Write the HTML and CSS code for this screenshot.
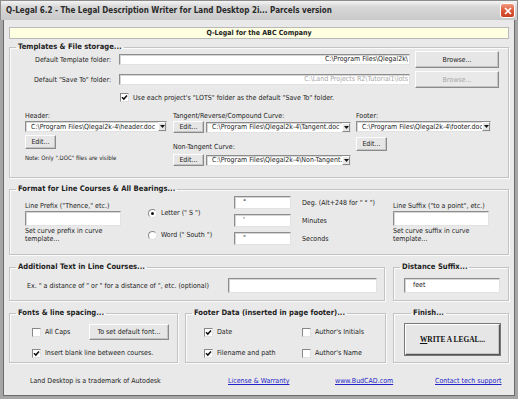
FILE: index.html
```html
<!DOCTYPE html>
<html lang="en">
<head>
    <meta charset="UTF-8">
    <title>Q-Legal 6.2</title>
    <link rel="stylesheet" href="styles.css">
</head>
<body>
<div class="window">
    <div class="titlebar">
        <span class="title">Q-Legal 6.2 - The Legal Description Writer for Land Desktop 2i... Parcels version</span>
        <span class="close"><svg width="8" height="8" viewBox="0 0 8 8"><path d="M1 1L7 7M7 1L1 7" stroke="#fff" stroke-width="1.6"/></svg></span>
    </div>
    <div class="frame">
        <div class="banner">Q-Legal for the ABC Company</div>

        <fieldset class="group templates">
            <legend>Templates &amp; File storage...</legend>
            <div class="folder-row first">
                <span class="folder-label">Default Template folder:</span>
                <span class="field folder-path">C:\Program Files\Qlegal2k\</span>
                <span class="button browse">Browse...</span>
            </div>
            <div class="folder-row">
                <span class="folder-label">Default "Save To" folder:</span>
                <span class="field folder-path disabled">C:\Land Projects R2\Tutorial1\lots</span>
                <span class="button browse disabled">Browse...</span>
            </div>
            <div class="check lots-check">
                <span class="box"><svg width="7" height="7" viewBox="0 0 7 7"><path d="M1 3.2l1.8 1.9L6 1.4" fill="none" stroke="#111" stroke-width="1.5"/></svg></span>
                Use each project's "LOTS" folder as the default "Save To" folder.
            </div>
            <div class="template-cols">
                <div class="tcol header-col">
                    <div class="cap">Header:</div>
                    <div class="field combo"><span class="combo-text">C:\Program Files\Qlegal2k-4\header.doc</span><span class="drop"><svg width="5" height="3" viewBox="0 0 5 3"><path d="M0 0h5L2.5 3z" fill="#111"/></svg></span></div>
                    <span class="button edit">Edit...</span>
                    <div class="note">Note: Only ".DOC" files are visible</div>
                </div>
                <div class="tcol curve-col">
                    <div class="cap">Tangent/Reverse/Compound Curve:</div>
                    <div class="edit-row">
                        <span class="button edit">Edit...</span>
                        <div class="field combo"><span class="combo-text">C:\Program Files\Qlegal2k-4\Tangent.doc</span><span class="drop"><svg width="5" height="3" viewBox="0 0 5 3"><path d="M0 0h5L2.5 3z" fill="#111"/></svg></span></div>
                    </div>
                    <div class="cap non-tangent">Non-Tangent Curve:</div>
                    <div class="edit-row second">
                        <span class="button edit">Edit...</span>
                        <div class="field combo"><span class="combo-text">C:\Program Files\Qlegal2k-4\Non-Tangent.doc</span><span class="drop"><svg width="5" height="3" viewBox="0 0 5 3"><path d="M0 0h5L2.5 3z" fill="#111"/></svg></span></div>
                    </div>
                </div>
                <div class="tcol footer-col">
                    <div class="cap">Footer:</div>
                    <div class="field combo"><span class="combo-text">C:\Program Files\Qlegal2k-4\footer.doc</span><span class="drop"><svg width="5" height="3" viewBox="0 0 5 3"><path d="M0 0h5L2.5 3z" fill="#111"/></svg></span></div>
                    <span class="button edit footer-edit">Edit...</span>
                </div>
            </div>
        </fieldset>

        <fieldset class="group format">
            <legend>Format for Line Courses &amp; All Bearings...</legend>
            <div class="format-cols">
                <div class="fcol prefix-col">
                    <div class="cap">Line Prefix ("Thence," etc.)</div>
                    <div class="field tall"></div>
                    <div class="hint">Set curve prefix in curve template...</div>
                </div>
                <div class="fcol radio-col">
                    <div class="radio"><span class="dot on"></span>Letter (" S ")</div>
                    <div class="radio word"><span class="dot"></span>Word (" South ")</div>
                </div>
                <div class="fcol symbol-col">
                    <div class="field symbol">°</div>
                    <div class="field symbol">'</div>
                    <div class="field symbol">"</div>
                </div>
                <div class="fcol unit-col">
                    <div class="unit">Deg. (Alt+248 for " ° ")</div>
                    <div class="unit">Minutes</div>
                    <div class="unit">Seconds</div>
                </div>
                <div class="fcol prefix-col suffix-col">
                    <div class="cap">Line Suffix ("to a point", etc.)</div>
                    <div class="field tall"></div>
                    <div class="hint">Set curve suffix in curve template...</div>
                </div>
            </div>
        </fieldset>

        <div class="group-row">
            <fieldset class="group additional">
                <legend>Additional Text in Line Courses...</legend>
                <div class="line-row">
                    <span>Ex. " a distance of " or " for a distance of ", etc. (optional)</span>
                    <div class="field tall extra-text"></div>
                </div>
            </fieldset>
            <fieldset class="group distance">
                <legend>Distance Suffix...</legend>
                <div class="line-row">
                    <div class="field tall distance-text">feet</div>
                </div>
            </fieldset>
        </div>

        <div class="group-row">
            <fieldset class="group fonts">
                <legend>Fonts &amp; line spacing...</legend>
                <div class="fonts-row">
                    <div class="check"><span class="box"></span>All Caps</div>
                    <span class="button font-btn">To set default font...</span>
                </div>
                <div class="check blank-check">
                    <span class="box"><svg width="7" height="7" viewBox="0 0 7 7"><path d="M1 3.2l1.8 1.9L6 1.4" fill="none" stroke="#111" stroke-width="1.5"/></svg></span>
                    Insert blank line between courses.
                </div>
            </fieldset>
            <fieldset class="group footer-data">
                <legend>Footer Data (inserted in page footer)...</legend>
                <div class="footer-grid">
                    <div class="check"><span class="box"><svg width="7" height="7" viewBox="0 0 7 7"><path d="M1 3.2l1.8 1.9L6 1.4" fill="none" stroke="#111" stroke-width="1.5"/></svg></span>Date</div>
                    <div class="check"><span class="box"></span>Author's Initials</div>
                    <div class="check"><span class="box"><svg width="7" height="7" viewBox="0 0 7 7"><path d="M1 3.2l1.8 1.9L6 1.4" fill="none" stroke="#111" stroke-width="1.5"/></svg></span>Filename and path</div>
                    <div class="check"><span class="box"></span>Author's Name</div>
                </div>
            </fieldset>
            <fieldset class="group finish">
                <legend>Finish...</legend>
                <span class="button write"><u>W</u>RITE A LEGAL...</span>
            </fieldset>
        </div>

        <div class="bottom-links">
            <span>Land Desktop is a trademark of Autodesk</span>
            <a href="#">License &amp; Warranty</a>
            <a href="#">www.BudCAD.com</a>
            <a href="#">Contact tech support</a>
        </div>
    </div>
</div>
</body>
</html>
```

FILE: styles.css
```css
* {
    box-sizing: border-box;
}
body {
    margin: 0;
    font-family: "DejaVu Sans Condensed", "DejaVu Sans", sans-serif;
    font-stretch: condensed;
    font-size: 7px;
    color: #222;
    background: #fff;
}
.window {
    width: 518px;
    height: 399px;
    display: flex;
    flex-direction: column;
    background: #e9e9e9;
}
.titlebar {
    height: 20px;
    display: flex;
    align-items: center;
    justify-content: space-between;
    padding: 0 2px 0 5px;
    background: linear-gradient(#f4f4f4, #d8d8d8 30%, #c9c9c9);
    border: 1px solid #8c8c8c;
    border-bottom: none;
}
.title {
    font-size: 8px;
    font-weight: bold;
    color: #2a2a2a;
    white-space: nowrap;
}
.close {
    width: 15px;
    height: 15px;
    display: flex;
    align-items: center;
    justify-content: center;
    border: 1px solid #fff;
    border-radius: 3px;
    background: linear-gradient(#f09a80, #dd5a3c 50%, #c93d20);
}
.frame {
    flex: 1;
    display: flex;
    flex-direction: column;
    border: solid #a6a6a6;
    border-width: 0 3px 3px;
    box-shadow: inset 1px 0 #6c6c6c, inset -1px 0 #6c6c6c, inset 0 -1px #6c6c6c;
    padding: 7px 6px 0;
}
.banner {
    height: 12px;
    line-height: 10px;
    text-align: center;
    font-weight: bold;
    background: #ffffe1;
    border: 1px solid #b9b9b9;
}

/* group boxes */
.group {
    margin: 0;
    padding: 0;
    min-width: 0;
    border: 1px solid #c3c3c3;
    box-shadow: inset 1px 1px #fbfbfb, 1px 1px #fbfbfb;
}
.group legend {
    margin-left: 6px;
    padding: 0 2px;
    font-size: 7.6px;
    font-weight: bold;
    line-height: 10px;
    color: #1e1e1e;
}
.templates {
    margin-top: 3px;
}
.format {
    margin-top: 6px;
}

/* controls */
.field {
    background: #fff;
    border: 1px solid;
    border-color: #8d8d8d #e2e2e2 #e2e2e2 #8d8d8d;
    box-shadow: inset 1px 1px #d6d6d6;
}
.button {
    display: flex;
    align-items: center;
    justify-content: center;
    background: #e6e6e6;
    border: 1px solid;
    border-color: #fdfdfd #8a8a8a #8a8a8a #fdfdfd;
    box-shadow: inset -1px -1px #c4c4c4;
    color: #222;
    white-space: nowrap;
}
.disabled {
    color: #a6a6a6;
}
.button.disabled {
    background: #e9e9e9;
}
.check {
    display: flex;
    align-items: center;
    white-space: nowrap;
}
.box {
    width: 9px;
    height: 9px;
    margin-right: 4px;
    display: flex;
    align-items: center;
    justify-content: center;
    background: #fff;
    border: 1px solid;
    border-color: #888 #e2e2e2 #e2e2e2 #888;
    flex-shrink: 0;
}
.cap {
    line-height: 10px;
    white-space: nowrap;
}

/* template folders */
.folder-row {
    display: flex;
    align-items: center;
    height: 17px;
    margin-top: 3px;
}
.folder-row.first {
    margin-top: -1px;
}
.folder-label {
    width: 101px;
    text-align: right;
}
.folder-path {
    width: 291px;
    height: 11px;
    margin-left: 8px;
    padding-right: 1px;
    line-height: 9px;
    text-align: right;
    overflow: hidden;
    white-space: nowrap;
}
.browse {
    width: 84px;
    height: 17px;
    margin-left: 5px;
}
.lots-check {
    margin-top: 4px;
    height: 11px;
    padding-left: 110px;
}
.template-cols {
    display: flex;
    margin: 8px 0 11px;
    padding-left: 15px;
}
.header-col {
    width: 142px;
}
.curve-col {
    width: 178px;
    margin-left: 6px;
}
.footer-col {
    width: 135px;
    margin-left: 5px;
}
.combo {
    height: 11px;
    display: flex;
    align-items: center;
    padding-left: 5px;
    overflow: hidden;
}
.combo-text {
    flex: 1;
    min-width: 0;
    padding-right: 2px;
    overflow: hidden;
    white-space: nowrap;
}
.drop {
    width: 8px;
    height: 9px;
    display: flex;
    align-items: center;
    justify-content: center;
    background: #e6e6e6;
    border: 1px solid;
    border-color: #fff #8a8a8a #8a8a8a #fff;
    flex-shrink: 0;
}
.edit {
    width: 31px;
    height: 14px;
}
.header-col .edit {
    margin-top: 3px;
}
.footer-edit {
    margin-top: 5px;
}
.note {
    margin-top: 5px;
    font-size: 6px;
    line-height: 8px;
    white-space: nowrap;
}
.edit-row {
    display: flex;
    align-items: center;
}
.edit-row .edit {
    height: 12px;
}
.edit-row .combo {
    width: 145px;
    margin-left: 2px;
}
.non-tangent {
    margin-top: 9px;
}
.edit-row.second {
    margin-top: 2px;
}

/* format */
.format-cols {
    display: flex;
    align-items: flex-start;
    padding: 0 0 8px 15px;
}
.prefix-col {
    width: 96px;
    margin-top: 7px;
}
.field.tall {
    height: 15px;
}
.hint {
    margin-top: 1px;
    line-height: 8px;
}
.radio-col {
    width: 86px;
    margin-left: 27px;
    margin-top: 14px;
}
.radio {
    display: flex;
    align-items: center;
    height: 10px;
    white-space: nowrap;
}
.radio.word {
    margin-top: 12px;
}
.dot {
    width: 9px;
    height: 9px;
    margin-right: 4px;
    border-radius: 50%;
    background: #fff;
    border: 1px solid;
    border-color: #8a8a8a #e2e2e2 #e2e2e2 #8a8a8a;
    display: flex;
    align-items: center;
    justify-content: center;
}
.dot.on::after {
    content: "";
    width: 3px;
    height: 3px;
    border-radius: 50%;
    background: #111;
}
.symbol-col {
    width: 57px;
    margin-top: 2px;
    display: flex;
    flex-direction: column;
    gap: 5px;
}
.field.symbol {
    height: 13px;
    padding-left: 8px;
    line-height: 10px;
}
.unit-col {
    width: 91px;
    margin-left: 11px;
    margin-top: 3px;
    display: flex;
    flex-direction: column;
    gap: 5px;
}
.unit {
    height: 13px;
    line-height: 13px;
    white-space: nowrap;
}

/* lower rows */
.group-row {
    display: flex;
    margin-top: 7px;
}
.additional {
    width: 376px;
}
.distance {
    width: 116px;
    margin-left: 8px;
}
.line-row {
    display: flex;
    align-items: center;
    padding: 6px 7px 7px 17px;
    white-space: nowrap;
}
.extra-text {
    width: 149px;
    margin-left: auto;
}
.distance .line-row {
    padding-left: 10px;
}
.distance-text {
    width: 96px;
    padding-left: 8px;
    line-height: 12px;
}
.fonts {
    width: 169px;
}
.fonts-row {
    display: flex;
    align-items: center;
    padding: 6px 0 0 22px;
}
.fonts-row .check {
    width: 57px;
}
.font-btn {
    width: 80px;
    height: 16px;
}
.blank-check {
    margin-top: 8px;
    height: 10px;
    padding-left: 22px;
}
.footer-data {
    width: 201px;
    margin-left: 7px;
}
.footer-grid {
    display: grid;
    grid-template-columns: 98px 1fr;
    grid-template-rows: 16px 10px;
    row-gap: 8px;
    padding: 6px 0 0 18px;
}
.finish {
    width: 116px;
    margin-left: 7px;
    padding: 6px 0 7px 11px;
}
.write {
    width: 95px;
    height: 31px;
    font-family: "Liberation Serif", serif;
    font-size: 7.4px;
    font-weight: bold;
    color: #111;
    border-color: #fff #555 #555 #fff;
    outline: 1px solid #777;
}

.bottom-links {
    display: grid;
    grid-template-columns: 198px 107px 100px auto;
    margin-top: 13px;
    padding-left: 21px;
    line-height: 10px;
    white-space: nowrap;
}
.bottom-links a {
    color: #2323c8;
    text-decoration: underline;
}
```
